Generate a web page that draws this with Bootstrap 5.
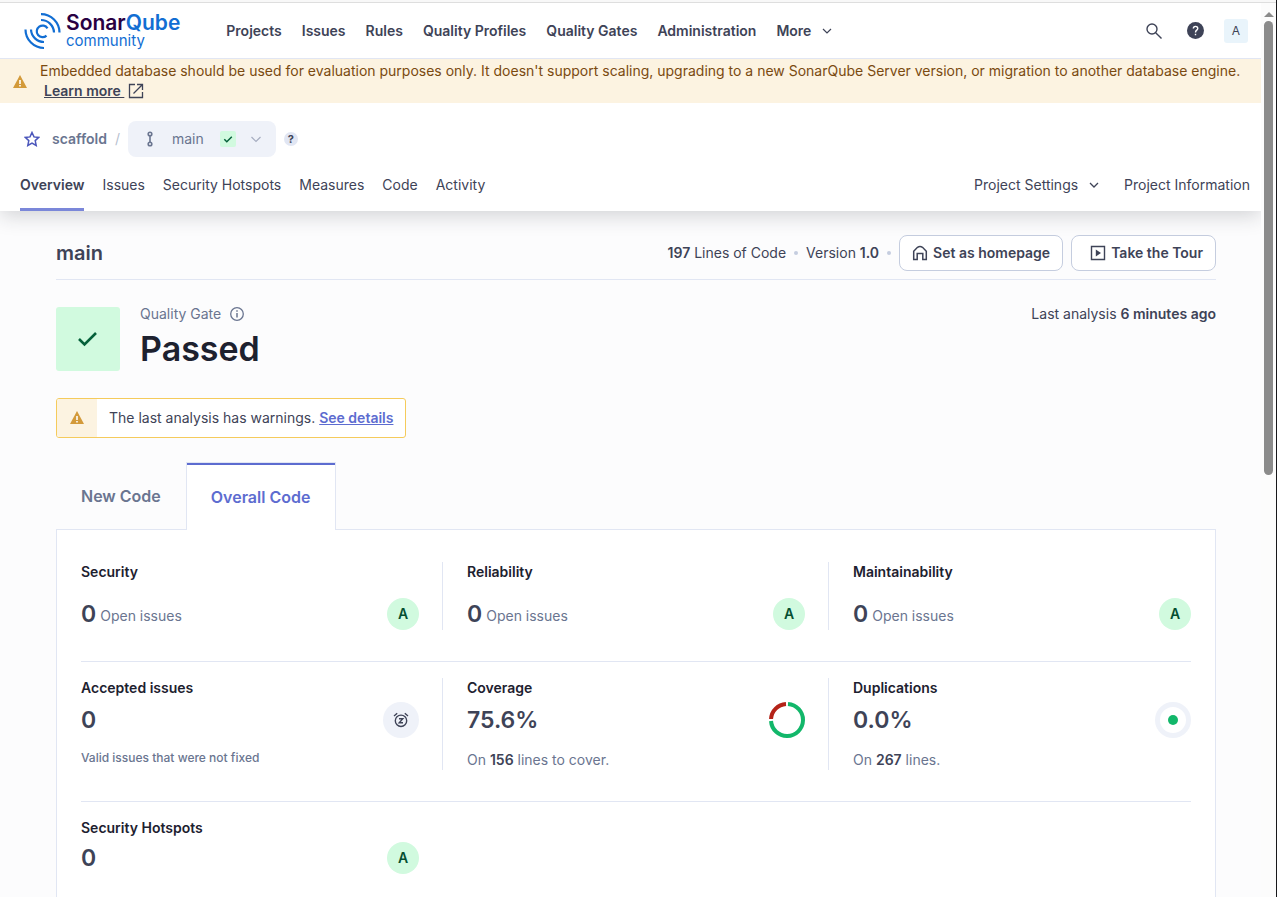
<!DOCTYPE html>
<html lang="en">
<head>
<meta charset="utf-8">
<meta name="viewport" content="width=device-width, initial-scale=1">
<title>scaffold - SonarQube</title>
<link href="https://cdn.jsdelivr.net/npm/bootstrap@5.3.0/dist/css/bootstrap.min.css" rel="stylesheet">
<style>
:root{--ink:#3e4357;--strong:#1d212f;--subtle:#6a7590;--line:#e1e6f3;--accent:#5d6cd0}
body{font-family:Inter,"Liberation Sans",sans-serif;font-size:14px;line-height:20px;color:var(--ink);background:#fcfcfd}
a,button{color:inherit}
button{background:none;border:0;padding:0}
svg{display:block;flex-shrink:0}
.top-strip{height:3px;background:#f8f8f8;border-bottom:1px solid #dedede}
.frame{border-right:1px solid #18181b}
.rail{width:15px;background:#fcfcfc;padding-top:6px}
.rail-thumb{width:9px;height:454px;border-radius:5px;background:#8b8b8b}
.topbar{height:56px;padding:0 13px 0 24px;border-bottom:1px solid var(--line)}
.logo-name{font-size:21px;line-height:20px;font-weight:600;color:#126ed3}
.logo-name span{color:#290042}
.logo-sub{font-size:15px;line-height:16px;color:#126ed3}
.main-nav{gap:20px;margin-left:46px;font-weight:600}
.avatar{width:24px;height:24px;margin-left:20px;border-radius:3px;background:#e9f4fb;font-size:12px}
.warn-banner{background:#fcf3e1;color:#7a4a10;padding:2px 16px 0 13px;height:44px;position:relative;z-index:2}
.warn-banner>svg{margin:14px 13px 0 0}
.warn-banner a{color:var(--ink);font-weight:600}
.warn-banner a svg{margin:2px 0 0 4px}
.project-head{padding:18px 11px 0 20px;box-shadow:0 4px 20px rgba(29,33,47,.2);z-index:1}
.branch-pill{height:36px;background:#eff2f9;border-radius:8px;padding:0 12px 0 14px;color:var(--subtle)}
.branch-pill span{margin-left:14px}
.crumb-slash{color:#b7bfcf}
.ok-box{background:#d1fadf;border-radius:2px}
.help-dot{width:14px;height:14px;border-radius:50%;background:#e1e6f3;font-size:11px;line-height:14px;font-weight:700}
.project-tabs{margin-top:18px;gap:18px}
.project-tabs a{padding-bottom:13px;border-bottom:3px solid transparent}
.project-tabs a.current{font-weight:600;border-color:#7b87d9}
.content-area{padding:24px 45px 0 56px}
.title-row{padding-bottom:8px;border-bottom:1px solid var(--line)}
.title-row h1{font-size:20px;line-height:28px;font-weight:600}
.meta-dot{width:4px;height:4px;border-radius:50%;background:#c5cddf}
.tool-btn{height:36px;border:1px solid #c5cddf;border-radius:8px;background:#fff;font-weight:600;padding:0 12px;gap:5px}
.tool-btn+.tool-btn{padding-left:18px}
.gate-row,.notice{margin-top:27px}
.gate-label{margin-top:-3px}
.gate-box{width:64px;height:64px;border-radius:3px}
.gate-word{font-size:34px;line-height:42px;font-weight:600;color:var(--strong)}
.subtle{color:var(--subtle)}
.subtle b{color:var(--ink)}
.notice{height:40px;border:1px solid #f5cb5c;border-radius:3px;background:#fff;overflow:hidden}
.notice-mark{width:40px;background:#fcf3e1}
.notice a{color:var(--accent);font-weight:600}
.code-tabs button{height:67px;padding:0 25px;font-size:16px;font-weight:600;color:var(--subtle)}
.code-tabs .current{height:68px;padding:0 25px 0 24px;margin-bottom:-1px;color:var(--accent);background:#fff;border:1px solid var(--line);border-bottom:0;box-shadow:inset 0 2px var(--accent);position:relative;z-index:1}
.measures{background:#fff;border:1px solid var(--line);border-bottom:0;padding:32px 24px 0}
.measure-row{--bs-gutter-x:48px}
.split{box-shadow:inset -1px 0 var(--line)}
.sep{height:1px;background:var(--line);margin:31px 0 16px}
.measures h2{font-size:14px;line-height:20px;font-weight:600;color:var(--strong);margin:0}
.value{font-size:23px;line-height:32px;font-weight:600}
.rating{width:32px;height:32px;border-radius:50%;background:#d1fadf;color:#054f31;font-weight:600}
.disc{width:36px;height:36px;border-radius:50%;background:#eff2f9}
.note{font-size:12px;line-height:24px;font-weight:500}
</style>
</head>
<body>
<div class="frame d-flex flex-column vh-100 overflow-hidden">
<div class="top-strip flex-shrink-0"></div>
<div class="d-flex flex-grow-1 overflow-hidden">
<div class="d-flex flex-column flex-grow-1 overflow-hidden">

<header class="topbar d-flex align-items-center flex-shrink-0 bg-white">
  <a href="#" class="d-flex align-items-center gap-1 text-decoration-none">
    <svg width="38" height="38" viewBox="0 0 38 38" fill="none" stroke="#126ed3" stroke-width="2.200"><path d="M17 2.200A18.500 18.500 0 0 1 35.500 20.500M17 8A13 13 0 0 1 30 20.500M1.500 17.500A18.500 18.500 0 0 0 20 36M7 17.500A13 13 0 0 0 20 30M23.500 16.300A5.800 5.800 0 1 0 22.500 23.600"/></svg>
    <span class="d-flex flex-column"><span class="logo-name"><span>Sonar</span>Qube</span><span class="logo-sub">community</span></span>
  </a>
  <nav class="main-nav d-flex flex-grow-1 text-nowrap">
    <a class="text-decoration-none" href="#">Projects</a><a class="text-decoration-none" href="#">Issues</a><a class="text-decoration-none" href="#">Rules</a><a class="text-decoration-none" href="#">Quality Profiles</a><a class="text-decoration-none" href="#">Quality Gates</a><a class="text-decoration-none" href="#">Administration</a>
    <button class="d-flex align-items-center gap-2 fw-semibold">More <svg width="16" height="16" viewBox="0 0 16 16" fill="none" stroke="currentColor" stroke-width="1.200"><path d="M4 6l4 4 4-4"/></svg></button>
  </nav>
  <div class="d-flex align-items-center">
    <button aria-label="Search"><svg width="18" height="18" viewBox="0 0 18 18" fill="none" stroke="currentColor" stroke-width="1.400"><circle cx="7" cy="7" r="5"/><path d="M10.700 10.700L16.500 16.500"/></svg></button>
    <button class="ms-4" aria-label="Help"><svg width="17" height="17" viewBox="0 0 18 18"><circle cx="9" cy="9" r="9" fill="#3e4357"/><path d="M6.700 7C6.700 3.800 11.400 3.900 11.400 6.800C11.400 8.600 9 8.700 9 11M9 12.500V14" fill="none" stroke="#fff" stroke-width="1.500"/></svg></button>
    <button class="avatar">A</button>
  </div>
</header>

<div class="warn-banner d-flex flex-shrink-0">
  <svg width="14" height="14" viewBox="0 0 14 14"><path d="M7 0L14 13H0z" fill="#d39a3a"/><path d="M6.200 5h1.600v4H6.200zM6.200 10h1.600v1.500H6.200z" fill="#fff"/></svg>
  <div>Embedded database should be used for evaluation purposes only. It doesn't support scaling, upgrading to a new SonarQube Server version, or migration to another database engine. <span class="d-flex ps-1"><a href="#" class="d-flex"><span>Learn more&nbsp;</span><svg width="16" height="16" viewBox="0 0 16 16" fill="none" stroke="currentColor" stroke-width="1.300"><path d="M7 1.500H1.500v13h13V9M9 1.500h5.500V7M14.500 1.500L5.500 10.500"/></svg></a></span></div>
</div>

<section class="project-head bg-white position-relative flex-shrink-0">
  <div class="d-flex align-items-center">
    <button class="px-1" aria-label="Favorite"><svg width="16" height="16" viewBox="0 0 16 16" fill="none" stroke="#4b56bb" stroke-width="1.500"><path d="M8 1.500l2 4.400 4.800.500-3.600 3.200 1 4.800L8 12l-4.200 2.400 1-4.800L1.200 6.400 6 5.900z"/></svg></button>
    <a href="#" class="ms-2 fw-semibold subtle text-decoration-none">scaffold</a>
    <span class="crumb-slash mx-2">/</span>
    <button class="branch-pill d-flex align-items-center">
      <svg width="16" height="16" viewBox="0 0 16 16" fill="none" stroke="currentColor" stroke-width="1.600"><circle cx="8" cy="3" r="1.800"/><circle cx="8" cy="13" r="1.800"/><path d="M8 5v6"/></svg>
      <span>main</span>
      <svg class="ok-box ms-3" width="16" height="16" viewBox="0 0 16 16" fill="none" stroke="#05603a" stroke-width="1.500"><path d="M4.300 8.200l2.500 2.500 5-5"/></svg>
      <svg class="ms-2 ps-1" width="20" height="16" viewBox="0 0 16 16" fill="none" stroke="#a6adc0" stroke-width="1.200"><path d="M3.500 6L8 10.500 12.500 6"/></svg>
    </button>
    <button class="help-dot ms-2" aria-label="Branch help">?</button>
  </div>
  <nav class="project-tabs d-flex text-nowrap">
    <a href="#" class="current text-decoration-none">Overview</a><a href="#" class="text-decoration-none">Issues</a><a href="#" class="text-decoration-none">Security Hotspots</a><a href="#" class="text-decoration-none">Measures</a><a href="#" class="text-decoration-none">Code</a><a href="#" class="text-decoration-none">Activity</a>
    <a href="#" class="text-decoration-none ms-auto d-flex align-items-center gap-2">Project Settings <svg width="16" height="16" viewBox="0 0 16 16" fill="none" stroke="currentColor" stroke-width="1.300"><path d="M4 6l4 4 4-4"/></svg></a><a href="#" class="text-decoration-none ps-1">Project Information</a>
  </nav>
</section>

<main class="content-area d-flex flex-column flex-grow-1">
  <div class="title-row d-flex align-items-center">
    <h1 class="m-0 me-auto">main</h1>
    <span><b class="fw-semibold">197</b> Lines of Code</span><span class="meta-dot mx-2"></span><span>Version <b class="fw-semibold">1.0</b></span><span class="meta-dot mx-2"></span>
    <button class="tool-btn d-flex align-items-center"><svg width="16" height="16" viewBox="0 0 16 16" fill="none" stroke="currentColor" stroke-width="1.500"><path d="M1.700 14.500V6.300L5.500 2.300Q8 .5 10.500 2.300L14.300 6.300v8.200h-3.500V8.500H5.200v6z"/></svg><span>Set as homepage</span></button>
    <button class="tool-btn d-flex align-items-center ms-2"><svg width="16" height="16" viewBox="0 0 16 16" fill="none" stroke="currentColor" stroke-width="1.400"><path d="M1.500 1.500h13v13h-13z"/><path d="M5.800 4.500v7l5.200-3.500z" fill="currentColor" stroke="none"/></svg><span>Take the Tour</span></button>
  </div>
  <div class="gate-row d-flex">
    <div class="ok-box gate-box d-flex align-items-center justify-content-center"><svg width="24" height="24" viewBox="0 0 24 24" fill="none" stroke="#05603a" stroke-width="2.600"><path d="M3 12l5.500 5.500L20 6"/></svg></div>
    <div class="gate-label ms-3 ps-1">
      <div class="subtle d-flex align-items-center gap-2">Quality Gate <svg width="16" height="16" viewBox="0 0 16 16" fill="none" stroke="currentColor" stroke-width="1.300"><circle cx="8" cy="8" r="6.300"/><path d="M8 7v4.500M8 4.300v1.500" stroke-width="1.500"/></svg></div>
      <div class="gate-word mt-1">Passed</div>
    </div>
    <div class="gate-label ms-auto">Last analysis <b class="fw-semibold">6 minutes ago</b></div>
  </div>
  <div class="notice d-flex align-self-start">
    <div class="notice-mark d-flex align-items-center justify-content-center"><svg width="14" height="14" viewBox="0 0 14 14"><path d="M7 0L14 13H0z" fill="#d39a3a"/><path d="M6.200 5h1.600v4H6.200zM6.200 10h1.600v1.500H6.200z" fill="#fff"/></svg></div>
    <div class="px-2 mx-1 align-self-center">The last analysis has warnings. <a href="#">See details</a></div>
  </div>
  <div class="code-tabs d-flex mt-4">
    <button>New Code</button><button class="current">Overall Code</button>
  </div>
  <div class="measures flex-grow-1">
    <div class="row row-cols-3 measure-row">
      <div class="col split"><h2>Security</h2><div class="d-flex mt-3"><span class="value">0</span><span class="subtle ms-1 pt-2">Open issues</span><span class="rating ms-auto d-flex align-items-center justify-content-center">A</span></div></div>
      <div class="col split"><h2>Reliability</h2><div class="d-flex mt-3"><span class="value">0</span><span class="subtle ms-1 pt-2">Open issues</span><span class="rating ms-auto d-flex align-items-center justify-content-center">A</span></div></div>
      <div class="col"><h2>Maintainability</h2><div class="d-flex mt-3"><span class="value">0</span><span class="subtle ms-1 pt-2">Open issues</span><span class="rating ms-auto d-flex align-items-center justify-content-center">A</span></div></div>
    </div>
    <div class="sep"></div>
    <div class="row row-cols-3 measure-row">
      <div class="col split"><h2>Accepted issues</h2>
        <div class="d-flex align-items-center mt-1"><span class="value">0</span><span class="disc ms-auto d-flex align-items-center justify-content-center"><svg width="16" height="16" viewBox="0 0 16 16" fill="none" stroke="currentColor" stroke-width="1.400"><circle cx="8" cy="8.800" r="5.700"/><path d="M1 4l3.200-2.700M15 4l-3.200-2.700M6 6.700h3.800L6.200 10.800H10"/></svg></span></div>
        <div class="note subtle mt-2">Valid issues that were not fixed</div></div>
      <div class="col split"><h2>Coverage</h2>
        <div class="d-flex align-items-center mt-1"><span class="value">75.6%</span><svg class="ms-auto" width="36" height="36" viewBox="0 0 36 36" fill="none" stroke-width="4"><path d="M19 2.030A16 16 0 1 1 2.030 19" stroke="#12b76a"/><path d="M2.030 17A16 16 0 0 1 17 2.030" stroke="#b42318"/></svg></div>
        <div class="subtle mt-2 pt-1">On <b class="fw-semibold">156</b> lines to cover.</div></div>
      <div class="col"><h2>Duplications</h2>
        <div class="d-flex align-items-center mt-1"><span class="value">0.0%</span><svg class="ms-auto" width="36" height="36" viewBox="0 0 36 36" fill="none"><circle cx="18" cy="18" r="15.500" stroke="#eff2f9" stroke-width="5"/><circle cx="18" cy="18" r="5" fill="#12b76a"/></svg></div>
        <div class="subtle mt-2 pt-1">On <b class="fw-semibold">267</b> lines.</div></div>
    </div>
    <div class="sep"></div>
    <div class="row row-cols-3 measure-row">
      <div class="col"><h2>Security Hotspots</h2><div class="d-flex mt-1"><span class="value">0</span><span class="rating ms-auto d-flex align-items-center justify-content-center">A</span></div></div>
    </div>
  </div>
</main>
</div>
<div class="rail flex-shrink-0 d-flex flex-column align-items-center" aria-hidden="true">
  <svg width="10" height="12" viewBox="0 0 10 12"><path d="M0 8L5 3l5 5z" fill="#8b8b8b"/></svg>
  <div class="rail-thumb"></div>
</div>
</div>
</div>
<script src="https://cdn.jsdelivr.net/npm/bootstrap@5.3.0/dist/js/bootstrap.bundle.min.js"></script>
</body>
</html>
